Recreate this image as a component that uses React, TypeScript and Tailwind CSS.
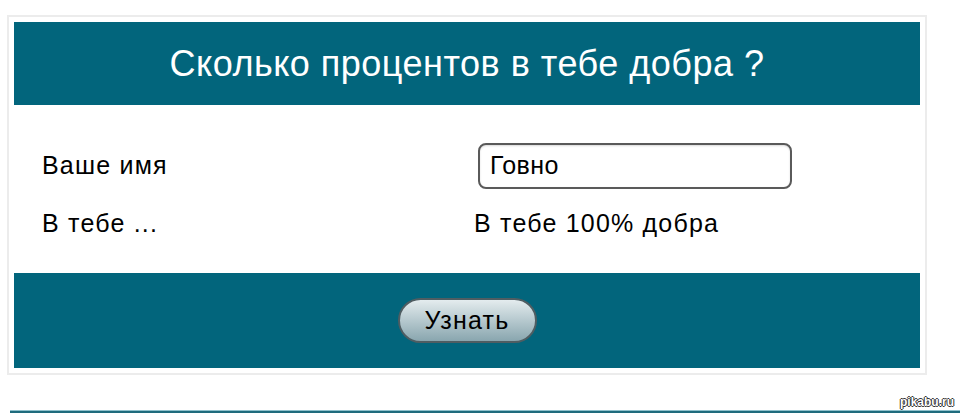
export default function App() {
  return (
    <div className="h-[413px] w-[960px] overflow-hidden bg-white font-['Liberation_Sans',Arial,sans-serif]">
      <div className="pl-[7px] pt-[15px]">
        <div className="w-[920px] border-2 border-[#ececec] p-[5px]">
          <div className="flex h-[83px] items-center justify-center bg-[#02657c] text-[36px] tracking-[0.5px] text-white">
            Сколько процентов в тебе добра ?
          </div>
          <div className="grid h-[168px] grid-cols-[432px_1fr] content-start pl-[28px] pt-[38px] text-[25px] tracking-[1.2px] text-black">
            <div className="flex h-[46px] items-center">Ваше имя</div>
            <div className="flex h-[46px] items-center">
              <div className="ml-[4px] flex h-[46px] w-[314px] items-center rounded-[8px] border-2 border-[#5a5a5a] bg-white pl-[10px] tracking-[0.4px] shadow-[inset_0_1px_2px_rgba(0,0,0,0.15)]">
                Говно
              </div>
            </div>
            <div className="mt-[21px] flex h-[28px] items-center">В тебе ...</div>
            <div className="mt-[21px] flex h-[28px] items-center">В тебе 100% добра</div>
          </div>
          <div className="flex h-[95px] items-center justify-center bg-[#02657c]">
            <button className="flex h-[45px] w-[139px] items-center justify-center rounded-full border-2 border-[#4f5d62] bg-gradient-to-b from-[#e4ecee] to-[#89a6af] text-[25px] tracking-[1.2px] text-black">
              Узнать
            </button>
          </div>
        </div>
      </div>
      <div className="flex justify-end pr-[6px] pt-[21px]">
        <span className="text-[12px] leading-[12px] font-bold text-white [text-shadow:1px_0_0_#333,-1px_0_0_#333,0_1px_0_#333,0_-1px_0_#333]">
          pikabu.ru
        </span>
      </div>
      <div className="ml-[10px] mt-[2px] h-[3px] border-t border-[#8fc1cc] bg-[#1f6b7d]" />
    </div>
  );
}
